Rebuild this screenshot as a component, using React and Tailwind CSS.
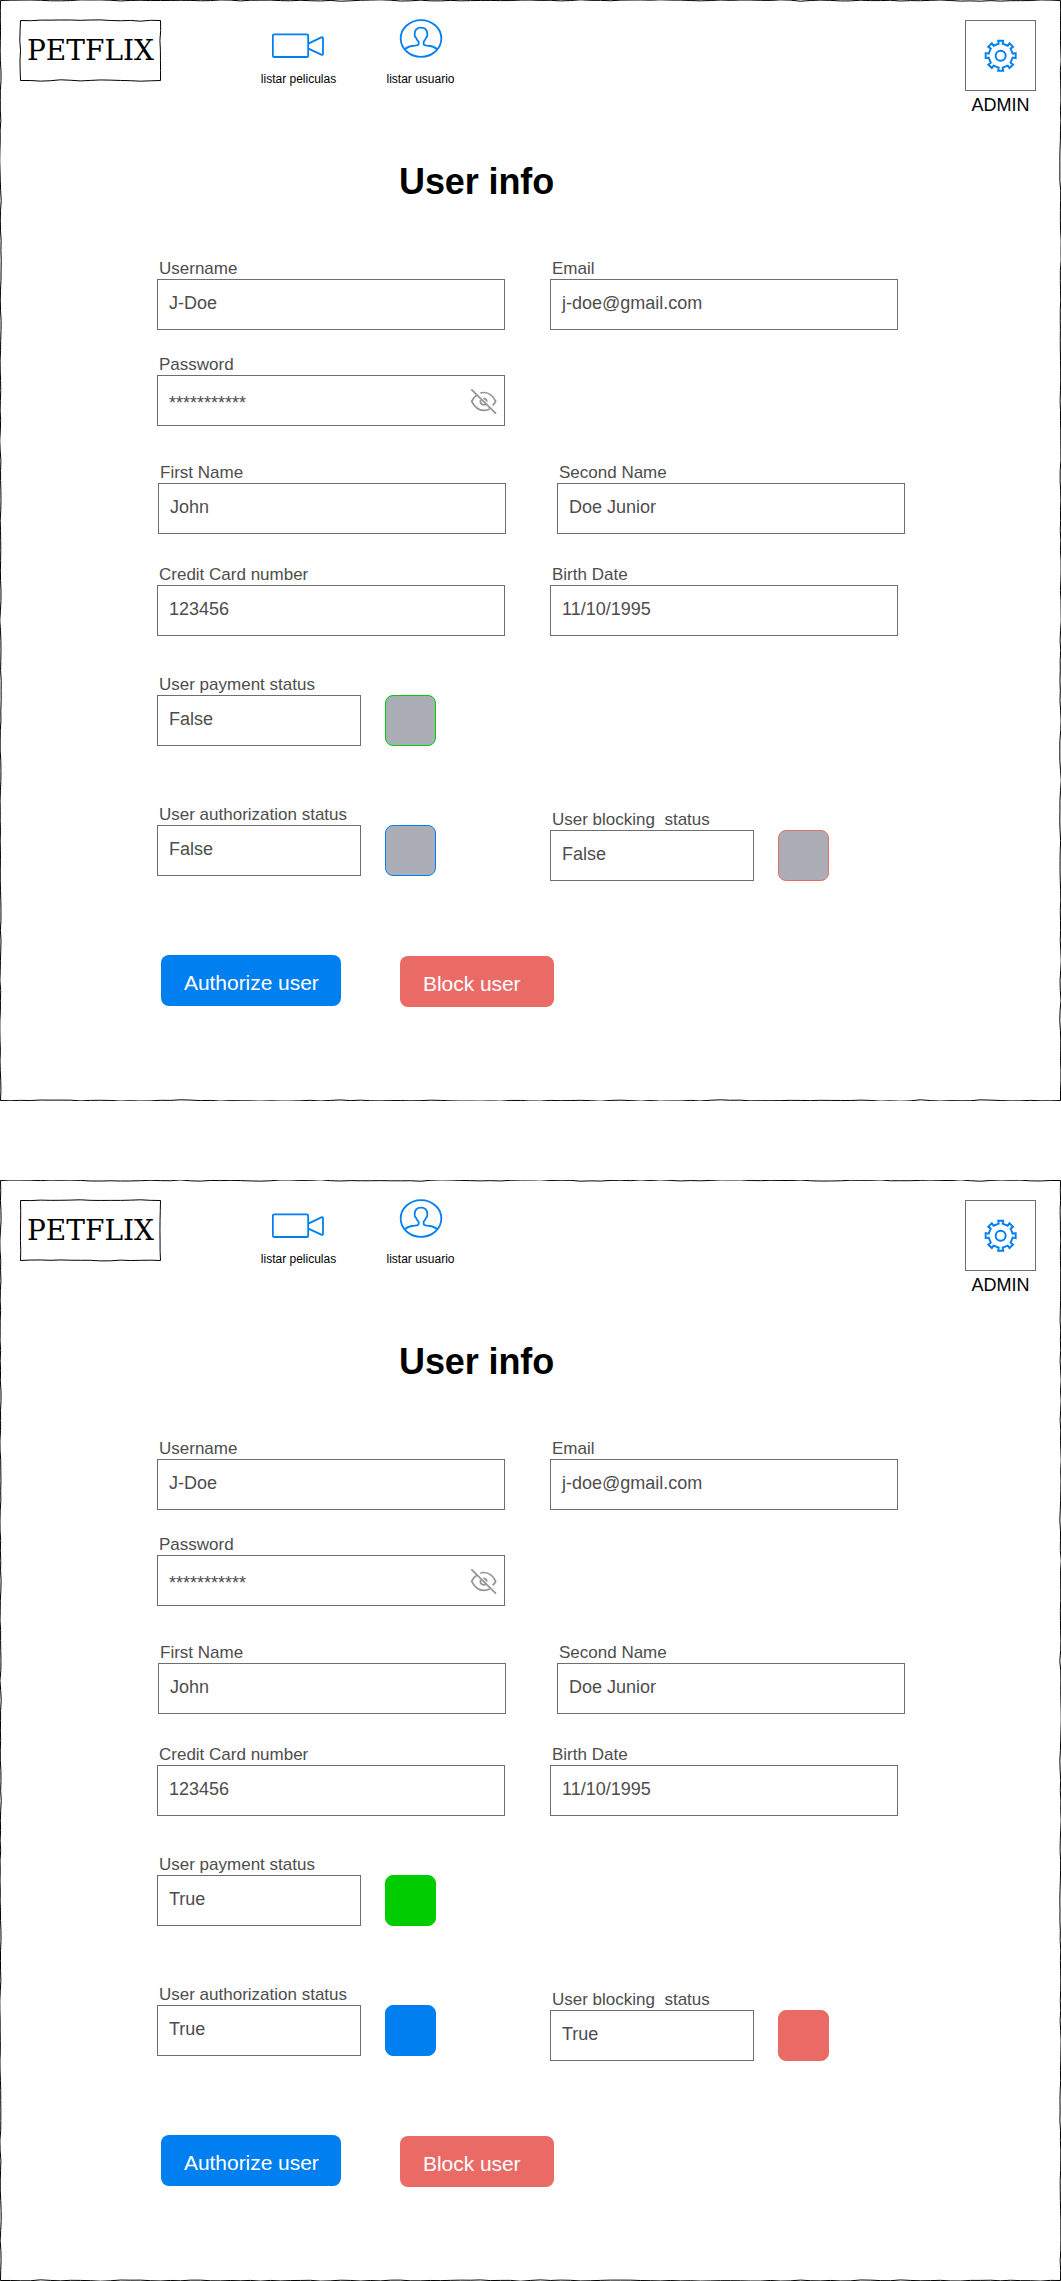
import React from "react";

const FRAME_W = 1061;
const FRAME_H = 1101;

// Small deterministic generator so each hand-drawn outline keeps its shape.
function makeRandom(seed) {
  let s = seed;
  return () => {
    s = (s * 1664525 + 1013904223) % 4294967296;
    return s / 4294967296;
  };
}

// Rectangle outline whose sides wander slightly, like a pen stroke.
function wobblyRect(x0, y0, x1, y1, seed) {
  const rnd = makeRandom(seed);
  const corners = [
    [x0, y0],
    [x1, y0],
    [x1, y1],
    [x0, y1],
    [x0, y0],
  ];
  let d = `M${x0} ${y0}`;
  for (let c = 0; c < 4; c++) {
    const [ax, ay] = corners[c];
    const [bx, by] = corners[c + 1];
    const horizontal = ay === by;
    const n = Math.round(Math.hypot(bx - ax, by - ay) / 20);
    for (let i = 1; i <= n; i++) {
      const t = i / n;
      const m = (i - 0.5) / n;
      const off = (rnd() - 0.5) * 1.5;
      const bend = (rnd() - 0.5) * 1.5;
      const end = i === n ? 0 : off;
      const px = ax + (bx - ax) * t + (horizontal ? 0 : end);
      const py = ay + (by - ay) * t + (horizontal ? end : 0);
      const qx = ax + (bx - ax) * m + (horizontal ? 0 : bend);
      const qy = ay + (by - ay) * m + (horizontal ? bend : 0);
      d += `Q${qx.toFixed(2)} ${qy.toFixed(2)} ${px.toFixed(2)} ${py.toFixed(2)}`;
    }
  }
  return d + "Z";
}

function gearPath() {
  const pts = [];
  for (let k = 0; k < 8; k++) {
    const a = (k * Math.PI) / 4;
    [
      [-6, 36],
      [-7.5, 45],
      [7.5, 45],
      [6, 36],
    ].forEach(([x, r]) => {
      const px = x * Math.cos(a) + r * Math.sin(a);
      const py = x * Math.sin(a) - r * Math.cos(a);
      pts.push(`${px.toFixed(1)} ${py.toFixed(1)}`);
    });
  }
  return `M${pts.join("L")}Z`;
}

function CameraIcon() {
  return (
    <svg className="h-[26px] w-[54px]" viewBox="36 56 162 78" fill="none" stroke="#0080f0" strokeWidth="5.4" strokeLinejoin="round">
      <rect x="38.5" y="60" width="106" height="68" rx="4" />
      <path d="M145 88L184 69Q189 67 189 72V118Q189 123 184 121L145 103" />
    </svg>
  );
}

function UserIcon() {
  return (
    <svg className="h-[40px] w-[44px]" viewBox="415 15 132 120" fill="none" stroke="#0080f0" strokeWidth="5.4" strokeLinejoin="round">
      <ellipse cx="481" cy="73.5" rx="61" ry="55" />
      <path d="M433 105Q444 96 462 95Q474 94 474 90V83Q467 77 466 71Q461 68 462 61Q462 41 481 41Q500 41 500 61Q501 68 496 71Q495 77 489 83V90Q489 94 500 95Q518 96 529 105" />
    </svg>
  );
}

function GearIcon() {
  return (
    <svg className="h-[34px] w-[34px]" viewBox="-50 -50 102 102" fill="none" stroke="#0080f0" strokeWidth="5.8">
      <path d={gearPath()} />
      <circle r="15" />
    </svg>
  );
}

function EyeOffIcon() {
  return (
    <svg className="h-[28px] w-[28px]" viewBox="986 441 84 84" fill="none" stroke="#949494" strokeWidth="5.2">
      <path d="M993 448L1067 521" />
      <path d="M1009 466Q998 473 994 484Q1008 511 1030 511Q1041 511 1048 507" />
      <path d="M1020 459Q1025 457.500 1031 457.500Q1054 458 1066 484Q1064 490 1057 496" />
      <path d="M1021 480Q1018 489 1025 493Q1031 496 1037 492" />
      <path d="M1029 475Q1038 475 1040 485" />
    </svg>
  );
}

function Field({ label, value, className = "w-[348px]", valueClass = "pt-[9px]", icon }) {
  return (
    <div className={className}>
      <div className="whitespace-pre pl-[2px] text-[17px] leading-[21px]">{label}</div>
      <div className="flex h-[51px] items-start justify-between border border-[#6e6e6e] pl-[11px] pr-[7px]">
        <span className={`text-[18px] leading-[28px] ${valueClass}`}>{value}</span>
        {icon}
      </div>
    </div>
  );
}

function StatusField({ label, on, tone }) {
  return (
    <div className="flex items-end gap-6">
      <Field label={label} value={on ? "True" : "False"} className="w-[204px]" />
      <div className={`size-[51px] rounded-[8px] border ${tone}`} />
    </div>
  );
}

function Screen({ on, seed }) {
  return (
    <section className="relative h-[1101px] w-[1061px] overflow-hidden bg-white text-[#4d4d4d]">
      <svg className="pointer-events-none absolute inset-0" width={FRAME_W} height={FRAME_H} fill="none" stroke="#000">
        <path d={wobblyRect(0.5, 0.5, 1060.5, 1100.5, seed)} />
      </svg>

      <header className="flex h-[161px] items-start pl-5 pr-[25px] pt-5 text-black">
        <div className="relative flex h-[61px] w-[141px] items-center justify-center">
          <svg className="absolute inset-0 overflow-visible" width="141" height="61" fill="none" stroke="#000">
            <path d={wobblyRect(0.5, 0.5, 140.5, 60.5, seed + 7)} />
          </svg>
          <span className="font-['DejaVu_Serif'] text-[28px] leading-[32px]">PETFLIX</span>
        </div>
        <nav className="ml-[99px] flex items-start text-[12px] leading-[14px]">
          <div className="flex w-[77px] flex-col items-center">
            <div className="mt-[13px] h-[39px]">
              <CameraIcon />
            </div>
            <span className="whitespace-nowrap">listar peliculas</span>
          </div>
          <div className="ml-[49px] flex w-[69px] flex-col items-center">
            <div className="-mt-[1px] h-[53px]">
              <UserIcon />
            </div>
            <span className="whitespace-nowrap">listar usuario</span>
          </div>
        </nav>
        <div className="ml-auto flex flex-col items-center">
          <div className="flex size-[71px] items-center justify-center border border-[#6e6e6e]">
            <GearIcon />
          </div>
          <span className="mt-[4px] text-[18px] leading-[20px]">ADMIN</span>
        </div>
      </header>

      <h1 className="pl-[399px] text-[36px] font-bold leading-[41px] tracking-[-0.1px] text-black">User info</h1>

      <div className="mt-[56px] pl-[157px]">
        <div className="flex gap-[45px]">
          <Field label="Username" value="J-Doe" />
          <Field label="Email" value="j-doe@gmail.com" />
        </div>
        <div className="mt-6">
          <Field
            label="Password"
            value="***********"
            valueClass="pt-[13px]"
            icon={
              <span className="mt-[11px]">
                <EyeOffIcon />
              </span>
            }
          />
        </div>
        <div className="ml-px mt-9 flex gap-[51px]">
          <Field label="First Name" value="John" />
          <Field label="Second Name" value="Doe Junior" />
        </div>
        <div className="mt-[30px] flex gap-[45px]">
          <Field label="Credit Card number" value="123456" />
          <Field label="Birth Date" value="11/10/1995" />
        </div>
        <div className="mt-[38px]">
          <StatusField label="User payment status" on={on} tone={on ? "border-[#00cc00] bg-[#00cc00]" : "border-[#00cc00] bg-[#abaeb6]"} />
        </div>
        <div className="mt-[58px] flex items-start gap-[114px]">
          <StatusField label="User authorization status" on={on} tone={on ? "border-[#0080f0] bg-[#0080f0]" : "border-[#0080f0] bg-[#abaeb6]"} />
          <div className="mt-[5px]">
            <StatusField label="User blocking  status" on={on} tone={on ? "border-[#ea6b66] bg-[#ea6b66]" : "border-[#ea6b66] bg-[#abaeb6]"} />
          </div>
        </div>
        <div className="ml-1 mt-[74px] flex items-start text-[21px] leading-[25px] text-white">
          <button className="h-[51px] w-[180px] rounded-[8px] bg-[#0080f0] pl-[23px] pt-[3px] text-left tracking-[-0.05px]">Authorize user</button>
          <button className="ml-[59px] mt-px h-[51px] w-[154px] rounded-[8px] bg-[#ea6b66] pl-[23px] pt-[3px] text-left tracking-[-0.05px]">Block user</button>
        </div>
      </div>
    </section>
  );
}

export default function App() {
  return (
    <main className="flex w-[1061px] flex-col gap-[79px] bg-white font-['Liberation_Sans',sans-serif]">
      <Screen on={false} seed={11} />
      <Screen on={true} seed={42} />
    </main>
  );
}
